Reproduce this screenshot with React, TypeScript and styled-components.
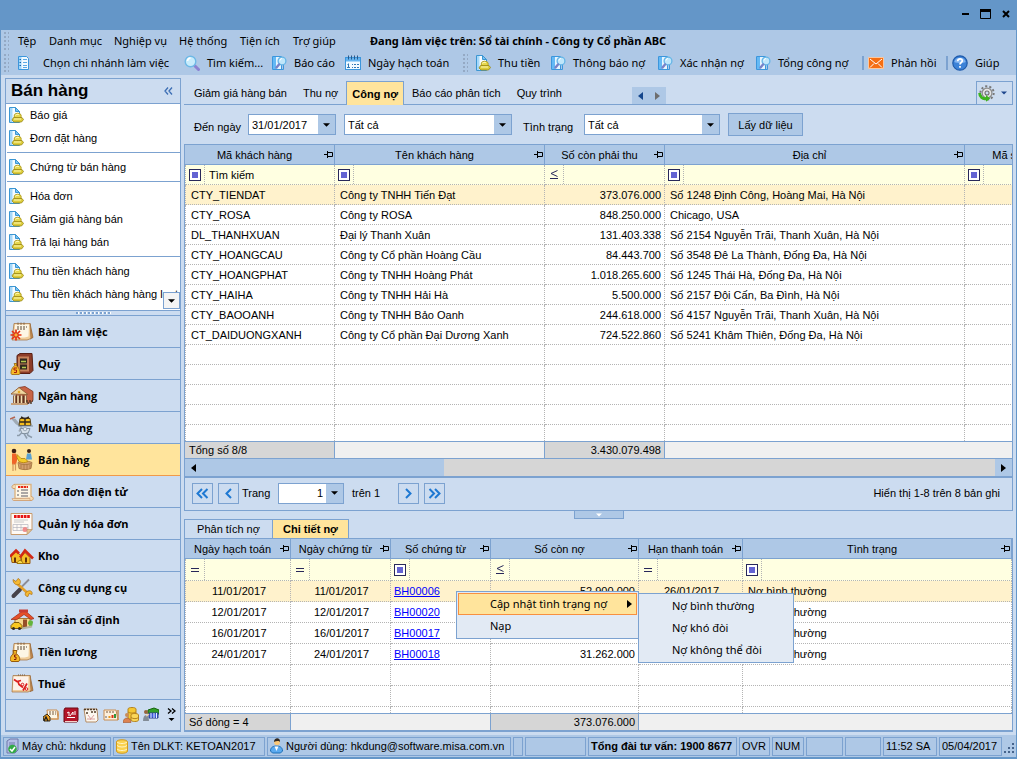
import React from 'react';
import styled, { createGlobalStyle, css } from 'styled-components';

const c = {
  frame: '#6496c8',
  bar: '#aec8e6',
  panel: '#ccdcf0',
  line: '#7ca2d0',
  active: '#ffe49c',
  rowActive: '#fff2cc',
  filter: '#ffffe1',
  dots: '#b4b4b4',
};

const sans = '"Liberation Sans", Arial, sans-serif';
const ui = '"Noto Sans", "Open Sans", sans-serif';
const uiBold = '"Open Sans", "Noto Sans", sans-serif';

const GlobalStyle = createGlobalStyle`
  *, *::before, *::after { box-sizing: border-box; }
  body { margin: 0; font: 11px/16px ${sans}; color: #000; background: ${c.panel}; }
  button, input, select { font: inherit; color: inherit; margin: 0; padding: 0; border: 0; background: none; border-radius: 0; outline: 0; }
  ul { list-style: none; margin: 0; padding: 0; }
  svg { display: block; flex: none; }
`;

/* ---------- page frame ---------- */
const Page = styled.div`
  min-height: 100vh;
  display: flex;
  flex-direction: column;
  background: ${c.panel};
  border: solid ${c.frame};
  border-width: 0 1px 2px;
  overflow: hidden;
`;
const TitleBar = styled.header`
  height: 30px;
  flex: none;
  margin: 0 -1px;
  padding: 0 5px 3px 0;
  display: flex;
  align-items: center;
  justify-content: flex-end;
  gap: 7px;
  background: ${c.frame};
`;
const WindowButton = styled.button`
  width: 13px;
  height: 13px;
  display: grid;
  place-items: center;
`;
const Bars = styled.div`
  height: 45px;
  flex: none;
  background: ${c.bar};
  font: 11px/18px ${ui};
  white-space: nowrap;
`;
const BarRow = styled.nav`
  height: 22px;
  padding-left: 2px;
  display: flex;
  align-items: center;
`;
const Grip = styled.span`
  width: 6px;
  height: 20px;
  flex: none;
  background-image: radial-gradient(circle, #94a9c4 1px, transparent 1px);
  background-size: 4px 4px;
`;
const MenuItem = styled.button<{ $w: number }>`
  width: ${(p) => p.$w}px;
  text-align: left;
  white-space: nowrap;
`;
const MenuList = styled.div`
  display: flex;
  padding-left: 9px;
`;
const WorkingOn = styled.strong``;
const ToolButton = styled.button<{ $w: number; $gap?: number }>`
  width: ${(p) => p.$w}px;
  flex: none;
  display: flex;
  align-items: center;
  gap: ${(p) => p.$gap ?? 7}px;
  white-space: nowrap;
`;
const ToolRow = styled(BarRow)`
  & > span + button { margin-left: 7px; }
`;
const ToolSeparator = styled.i`
  width: 2px;
  height: 14px;
  flex: none;
  margin-right: 4px;
  background: ${c.line};
`;
const Body = styled.div`
  flex: 1;
  display: flex;
  gap: 3px;
  padding: 3px 3px 3px 4px;
`;

/* ---------- sidebar ---------- */
const Sidebar = styled.aside`
  width: 176px;
  flex: none;
  display: flex;
  flex-direction: column;
  border: 1px solid ${c.line};
  border-bottom-width: 2px;
`;
const SideHeader = styled.div`
  height: 25px;
  padding: 0 5px;
  display: flex;
  align-items: center;
  justify-content: space-between;
  border-bottom: 1px solid ${c.line};
`;
const SideTitle = styled.h1`
  margin: 0;
  font: bold 17px/24px ${sans};
`;
const TaskArea = styled.div`
  height: 207px;
  display: grid;
  background: #fff;
  border-bottom: 1px solid ${c.line};
  overflow: hidden;
`;
const TaskList = styled.ul`
  grid-area: 1 / 1;
  min-width: 0;
`;
const TaskItem = styled.li<{ $last?: boolean }>`
  ${(p) =>
    p.$last &&
    css`
      &::after {
        content: '';
        display: block;
        height: 1px;
        margin: 2px 0 3px 1px;
        background: ${c.line};
      }
    `}
`;
const TaskButton = styled.button`
  height: 23px;
  width: 100%;
  padding: 0 0 1px 2px;
  display: flex;
  align-items: center;
  gap: 6px;
  white-space: nowrap;
  overflow: hidden;
`;
const ScrollDown = styled.button`
  grid-area: 1 / 1;
  place-self: end;
  z-index: 1;
  width: 17px;
  height: 17px;
  margin-bottom: 1px;
  display: grid;
  place-items: center;
  background: #f4f4f4;
  border: 1px solid ${c.line};
`;
const SideSplitter = styled.div`
  height: 4px;
  display: grid;
  place-items: center;
  &::after {
    content: '';
    width: 35px;
    height: 2px;
    background: repeating-linear-gradient(90deg, ${c.line} 0 2px, #fff 2px 3px, transparent 3px 4px);
  }
`;
const ModuleList = styled.ul`
  border-top: 1px solid ${c.line};
`;
const ModuleButton = styled.button<{ $on?: boolean }>`
  width: 100%;
  height: 32px;
  padding-left: 4px;
  display: flex;
  align-items: center;
  gap: 4px;
  font: bold 11px/16px ${uiBold};
  border-bottom: 1px solid ${(p) => (p.$on ? '#f09a4a' : c.line)};
  background: ${(p) => (p.$on ? c.active : 'none')};
`;
const MiniRow = styled.div`
  flex: 1;
  min-height: 30px;
  padding-right: 4px;
  display: flex;
  align-items: center;
  justify-content: flex-end;
  gap: 4px;
`;
const MiniButton = styled.button`
  display: block;
  &:last-child { margin-left: 4px; }
`;

/* ---------- main ---------- */
const Main = styled.main`
  flex: 1;
  min-width: 0;
  display: flex;
  flex-direction: column;
`;
const TabStrip = styled.div`
  height: 27px;
  padding: 3px 0 0 2px;
  display: flex;
  align-items: stretch;
  border-bottom: 1px solid ${c.line};
`;
const Tab = styled.button<{ $on?: boolean }>`
  height: 23px;
  padding: 0 8px;
  white-space: nowrap;
  ${(p) =>
    p.$on &&
    css`
      height: 24px;
      padding: 0 5px;
      font-weight: bold;
      background: ${c.active};
      border: 1px solid ${c.line};
      border-bottom: 0;
    `}
`;
const TabScroll = styled.div`
  margin: 6px auto 0 62px;
  display: flex;
  background: ${c.bar};
`;
const TabScrollButton = styled.button`
  width: 17px;
  display: grid;
  place-items: center;
`;
const GearButton = styled.button`
  width: 37px;
  height: 24px;
  display: flex;
  align-items: center;
  gap: 6px;
  padding-left: 1px;
  border: 1px solid ${c.line};
`;
const FilterBar = styled.form`
  height: 39px;
  padding-left: 10px;
  display: flex;
  align-items: center;
  gap: 8px;
`;
const FieldLabel = styled.label<{ $w: number }>`
  width: ${(p) => p.$w}px;
  flex: none;
  padding-top: 4px;
  white-space: nowrap;
`;
const Field = styled.div<{ $w: number }>`
  width: ${(p) => p.$w}px;
  height: 21px;
  display: grid;
  grid-template-columns: 1fr 17px;
  background: #fff;
  border: 1px solid ${c.line};
  & > input, & > select { grid-area: 1 / 1 / 2 / 2; width: 100%; min-width: 0; padding-left: 3px; }
  & > select { grid-column-end: 3; appearance: none; }
`;
const FieldArrow = styled.span`
  grid-area: 1 / 2;
  z-index: 1;
  display: grid;
  place-items: center;
  background: ${c.bar};
  pointer-events: none;
`;
const PageField = styled(Field)`
  & > select { text-align: right; text-align-last: right; padding-right: 20px; }
`;
const LoadButton = styled.button`
  width: 75px;
  height: 23px;
  background: ${c.bar};
  border: 1px solid ${c.line};
`;

/* ---------- data grids ---------- */
const GridPanel = styled.section`
  border: 1px solid ${c.line};
  overflow: hidden;
`;
const GridTable = styled.table<{ $extra?: number }>`
  width: calc(100% + ${(p) => p.$extra ?? 0}px);
  table-layout: fixed;
  border-collapse: separate;
  border-spacing: 0;
  background: #fff;
`;
const HeadCell = styled.th`
  height: 20px;
  padding: 0;
  font-weight: normal;
  background: ${c.bar};
  border: solid ${c.line};
  border-width: 0 1px 1px 0;
`;
const HeadInner = styled.div`
  display: flex;
  align-items: center;
  padding-right: 1px;
  white-space: nowrap;
  & > span { flex: 1; text-align: center; }
`;
const Cell = styled.td<{ $h: number; $align?: string; $on?: boolean; $open?: boolean }>`
  height: ${(p) => p.$h}px;
  padding: 0 3px 0 5px;
  line-height: 14px;
  text-align: ${(p) => p.$align ?? 'left'};
  white-space: nowrap;
  overflow: hidden;
  background: ${(p) => (p.$on ? c.rowActive : 'none')};
  border: dotted ${c.dots};
  border-width: 0 1px ${(p) => (p.$open ? 0 : 1)}px 0;
  &:first-child { border-left-width: 1px; }
`;
const FilterCell = styled(Cell)`
  padding: 0;
  background: ${c.filter};
`;
const FilterInner = styled.div<{ $h: number }>`
  height: ${(p) => p.$h}px;
  display: flex;
  & > input { flex: 1; width: 0; padding-left: 4px; }
`;
const OpButton = styled.button`
  width: 19px;
  display: grid;
  place-items: center;
  border-right: 1px dotted ${c.dots};
`;
const FootCell = styled.td<{ $fill?: boolean; $align?: string; $h: number }>`
  height: ${(p) => p.$h}px;
  padding: 0 3px 0 4px;
  line-height: 14px;
  text-align: ${(p) => p.$align ?? 'left'};
  background: ${(p) => (p.$fill ? '#d6d6d6' : '#f0f0f0')};
  border-top: 1px solid ${c.line};
  border-right: ${(p) => (p.$fill ? `1px solid ${c.line}` : 0)};
  &:has(+ [data-fill]) { border-right: 1px solid ${c.line}; }
`;
const DocLink = styled.a`
  color: #00f;
  margin-left: -2px;
`;
const HScroll = styled.div`
  height: 20px;
  display: grid;
  grid-template-columns: 17px minmax(0, 242fr) minmax(0, 551fr) 17px;
  background: ${c.bar};
  border: solid ${c.line};
  border-width: 1px 0 2px;
`;
const ScrollTrack = styled.span`
  grid-column: 3;
  background: #d6d6d6;
`;
const ScrollButton = styled.button`
  display: grid;
  place-items: center;
`;
const Pager = styled.div`
  height: 32px;
  padding: 0 12px 2px 7px;
  display: flex;
  align-items: center;
  gap: 5px;
  background: ${c.panel};
`;
const PageButton = styled.button`
  width: 21px;
  height: 21px;
  flex: none;
  display: grid;
  place-items: center;
  border: 1px solid ${c.line};
`;
const PagerBack = styled.div`
  display: flex;
  gap: 5px;
  margin-right: -5px;
`;
const PagerText = styled.label<{ $w: number }>`
  width: ${(p) => p.$w}px;
  padding-left: 3px;
`;
const PagerInfo = styled.span`
  margin-left: auto;
`;
const Splitter = styled.div`
  height: 8px;
  display: flex;
  justify-content: center;
`;
const SplitterButton = styled.button`
  width: 50px;
  display: grid;
  place-items: center;
  background: ${c.bar};
  border: 1px solid ${c.line};
  border-top: 0;
`;
const Detail = styled.section`
  position: relative;
  flex: 1;
`;
const DetailTabs = styled.div`
  display: flex;
`;
const DetailTab = styled.button<{ $w: number; $on?: boolean }>`
  width: ${(p) => p.$w}px;
  height: 19px;
  border: solid ${c.line};
  border-width: 1px 0 0 1px;
  font-weight: ${(p) => (p.$on ? 'bold' : 'normal')};
  background: ${(p) => (p.$on ? c.active : 'none')};
  &:last-child { border-right-width: 1px; }
`;
const DetailGrid = styled(GridPanel)`
  border-bottom-width: 2px;
`;

/* ---------- context menu ---------- */
const menuBox = css`
  position: absolute;
  padding: 1px;
  background: #e2eaf4;
  border: 1px solid ${c.line};
`;
const ContextMenu = styled.div`
  ${menuBox}
  left: 272px;
  top: 72px;
  width: 183px;
  z-index: 2;
`;
const SubMenu = styled.div`
  ${menuBox}
  left: 100%;
  top: 1px;
  width: 156px;
`;
const MenuRow = styled.button<{ $on?: boolean }>`
  width: 100%;
  height: 22px;
  padding: 0 5px 0 32px;
  display: flex;
  align-items: center;
  justify-content: space-between;
  font: 11px/16px ${ui};
  white-space: nowrap;
  ${(p) =>
    p.$on &&
    css`
      padding: 0 4px 0 31px;
      background: ${c.active};
      border: 1px solid #f89040;
    `}
`;

/* ---------- status bar ---------- */
const StatusBar = styled.footer`
  height: 22px;
  padding: 0 0 0 2px;
  display: flex;
  align-items: center;
  gap: 2px;
  background: ${c.bar};
`;
const StatusCell = styled.span<{ $w: number; $bold?: boolean }>`
  width: ${(p) => p.$w}px;
  height: 19px;
  padding: 0 2px;
  display: flex;
  align-items: center;
  gap: 3px;
  white-space: nowrap;
  font-weight: ${(p) => (p.$bold ? 'bold' : 'normal')};
  border: 1px solid ${c.line};
`;
const Resize = styled.span`
  margin: 6px 0 0 auto;
`;

/* ---------- small glyphs ---------- */
const Down = ({ w = 7, fill = '#000' }: { w?: number; fill?: string }) => (
  <svg width={w} height="4" viewBox="0 0 8 4"><path d="M0 0h8L4 4z" fill={fill} /></svg>
);
const Side = ({ right, fill = '#000' }: { right?: boolean; fill?: string }) => (
  <svg width="5" height="8" viewBox="0 0 5 8"><path d={right ? 'M0 0v8l5-4z' : 'M5 0v8L0 4z'} fill={fill} /></svg>
);
const Pin = () => (
  <svg width="9" height="7" viewBox="0 0 9 7" fill="none" stroke="#000">
    <path d="M0 3.5h3M3.5 0v7M4 1.5h4.5v4H4" />
  </svg>
);
const SquareOp = () => (
  <svg width="12" height="12" viewBox="0 0 12 12">
    <rect x=".5" y=".5" width="11" height="11" fill="#fff" stroke="#28285a" />
    <rect x="3" y="3" width="6" height="6" fill="#6464d2" />
  </svg>
);
const EqualOp = () => (
  <svg width="8" height="4" viewBox="0 0 8 4"><path d="M0 .5h8M0 3.5h8" stroke="#28285a" /></svg>
);
const LessOp = () => (
  <svg width="8" height="9" viewBox="0 0 8 9" fill="none" stroke="#28285a">
    <path d="M7.500 .5L1 3.500l6.500 3M0 8.500h8" />
  </svg>
);
const Chevrons = ({ right, two }: { right?: boolean; two?: boolean }) => (
  <svg width="13" height="11" viewBox="0 0 13 11" fill="none" stroke="#1e78d2" strokeWidth="2">
    <g transform={right ? 'matrix(-1 0 0 1 13 0)' : undefined}>
      <path d={two ? 'M6 1L1.500 5.500 6 10M11.500 1L7 5.500l4.500 4.500' : 'M9 1L4.500 5.500 9 10'} />
    </g>
  </svg>
);

/* ---------- toolbar icons ---------- */
const Icon = ({ children, s = 16 }: { children: React.ReactNode; s?: number }) => (
  <svg width={s} height={s} viewBox="0 0 16 16" fill="none">{children}</svg>
);
const DocListIcon = () => (
  <Icon>
    <path d="M2.500 1.500h8l2 2v11h-10z" fill="#f2faff" stroke="#3c96dc" />
    <path d="M3 2h2.500v12H3z" fill="#a0d7fa" />
    <path d="M7 4.500h4M7 7.500h4M7 10.500h4M7 12.500h4" stroke="#5aaae6" />
    <path d="M3.500 4.500h1.500M3.500 7.500h1.500M3.500 10.500h1.500" stroke="#1e64aa" />
  </Icon>
);
const LensIcon = () => (
  <Icon>
    <path d="M11 11l3.500 3.500" stroke="#8c82d2" strokeWidth="3" strokeLinecap="round" />
    <circle cx="6.500" cy="6.500" r="5.300" fill="#c8ecfc" stroke="#6eb9e6" strokeWidth="1.400" />
    <path d="M3.500 6a3.300 3.300 0 013-3" stroke="#fff" strokeWidth="1.600" />
  </Icon>
);
const ReportIcon = () => (
  <Icon>
    <path d="M1.500 1.500h9v13h-9z" fill="#e6f5ff" stroke="#3c96dc" />
    <path d="M2 2h3v12H2z" fill="#64b9f5" />
    <path d="M12.500 9v5.500h-3" stroke="#3c96dc" />
    <circle cx="11" cy="6" r="3.900" fill="#bfe6fa" stroke="#64b4e6" strokeWidth="1.300" />
    <path d="M8 9.500L5.500 12.500" stroke="#7882c8" strokeWidth="2.400" strokeLinecap="round" />
    <path d="M9 5.500a2 2 0 012-2" stroke="#fff" />
  </Icon>
);
const CalendarIcon = () => (
  <Icon>
    <rect x=".5" y="2.500" width="15" height="12" fill="#f2faff" stroke="#3c96dc" />
    <path d="M1 3h14v3.500H1z" fill="#64b4f0" />
    <path d="M3.500 .5v4M6.500 .5v4M9.500 .5v4M12.500 .5v4" stroke="#285a8c" />
    <path d="M3.500 8.500v4.500M2.500 9.500h1M2 12.500h3M7 9.500h7M7 12.500h7" stroke="#3278b4" />
    <path d="M8.500 8v6M11.500 8v6" stroke="#f2faff" />
  </Icon>
);
const DocCoinIcon = () => (
  <Icon>
    <path d="M1.500 .5h6l4 4v11h-10z" fill="#f5fbff" stroke="#3c96d2" />
    <path d="M2 1h2.500v14H2z" fill="#a5d8fa" />
    <path d="M7.500 .5v4h4z" fill="#78c3f5" stroke="#3c96d2" />
    <ellipse cx="9.700" cy="9" rx="3.600" ry="2.800" fill="#e6d74b" stroke="#aa9619" strokeWidth=".8" />
    <path d="M5.500 10.500h8.500l1.500 2-2 2.500H6l-2-2z" fill="#dccd3c" stroke="#9b8714" strokeWidth=".8" />
    <path d="M7 8.500c1-1.200 3-1.400 4-.8M6 12h7" stroke="#fff8b4" />
  </Icon>
);
const MailIcon = () => (
  <Icon>
    <path d="M.5 2.500h15v11H.5z" fill="#f56e14" stroke="#fac8a0" />
    <path d="M2 4l6 5 6-5M2 12.500l4-4M14 12.500l-4-4" stroke="#fff" />
  </Icon>
);
const HelpIcon = () => (
  <Icon>
    <circle cx="8" cy="8" r="7.200" fill="#3c82d7" stroke="#1e5aaa" strokeWidth="1.200" />
    <path d="M2.300 7a5.800 5.300 0 0111.400 0c-3 1.500-8.400 1.500-11.400 0z" fill="#82b4f0" />
    <path d="M5.700 6.200C5.700 3 10.500 3.200 10.300 6 10.200 7.500 8 7.500 8 9.500M8 11v1.800" stroke="#fff" strokeWidth="1.700" />
  </Icon>
);
const GearIcon = () => (
  <Icon s={17}>
    <circle cx="8.500" cy="7.500" r="6.300" stroke="#787878" strokeWidth="1.800" strokeDasharray="2 1.960" />
    <circle cx="8.500" cy="7.500" r="4.600" fill="#e6e6e6" stroke="#8c8c8c" strokeWidth="1.200" />
    <circle cx="8.500" cy="7.500" r="1.900" fill="#ccdcf0" stroke="#6e6e6e" />
    <path d="M1.500 7.500c0 4 3 6 6.500 5.300" stroke="#3cb41e" strokeWidth="2.600" />
    <path d="M7.500 9.500l4 3.300-4 3z" fill="#3cb41e" />
  </Icon>
);

/* ---------- module icons ---------- */
const cal = (
  <>
    <path d="M20 3l3 14-3 1.500z" fill="#c88c50" stroke="#8c5a28" strokeWidth=".7" />
    <path d="M4 3h16l1 15-4 1.500H2z" fill="#f0cd9b" stroke="#a06e3c" strokeWidth=".7" />
    <path d="M5 4h14l-.5 12c-4 1.500-9 1-14 1z" fill="#fdf6e6" />
    <path d="M7 6.500h10M7 8.500h9" stroke="#5a4632" strokeDasharray="2 1" />
    <path d="M8 2v2.500M11 2v2.500M14 2v2.500" stroke="#785a3c" strokeWidth=".8" />
  </>
);
const moduleArt: Record<string, React.ReactNode> = {
  desk: (
    <>{cal}<path d="M6 9v11M.5 14.500h11M2 10.500l8 8M10 10.500l-8 8" stroke="#e63214" strokeWidth="1.700" /><circle cx="6" cy="14.500" r="2.200" fill="#ffb43c" stroke="#d22814" /></>
  ),
  safe: (
    <>
      <path d="M7 3l3-2h12l1 17-3 3H7z" fill="#8c3c28" stroke="#5a2014" />
      <path d="M8 4h11v15H8z" fill="#c8825a" />
      <path d="M10 6h7v5h-7zM10 12h7v5h-7z" fill="#32281e" />
      <path d="M11 9h5M12 15h4" stroke="#b4c850" strokeWidth="1.600" />
      <path d="M4 11h3l-1 2c4 2 5 9 3 9H2c-2 0-1-7 3-9z" fill="#f5b928" stroke="#96640a" strokeWidth=".8" />
      <path d="M7 15.500H4v2h2.500v2.500H4" stroke="#aa1e0a" />
    </>
  ),
  bank: (
    <>
      <path d="M9 3l6-1 8 5v9l-6 4H3z" fill="#c86446" stroke="#82321e" strokeWidth=".8" />
      <path d="M1 9.500L9 3l9 7z" fill="#f0d7a0" stroke="#96643c" />
      <path d="M3 11h14v8H3z" fill="#64321e" />
      <path d="M4.500 11v8M8 11v8M11.500 11v8M15.500 11v8" stroke="#f5e1b4" strokeWidth="1.600" />
      <path d="M1 19.500h17" stroke="#c8a078" strokeWidth="2" />
      <path d="M16 16.500h7M17 18.500h6" stroke="#503c28" strokeWidth="1.500" strokeDasharray="2 1" />
      <circle cx="9" cy="7.500" r="1.300" fill="#e6aa28" />
    </>
  ),
  buy: (
    <>
      <path d="M2 3h3l5 6M3 3c3 5 6 6 8 7M12 10l-3 5" stroke="#a0aab4" strokeWidth="1.600" />
      <path d="M0 2.500l5-2" stroke="#b46450" strokeWidth="1.600" />
      <path d="M10 2h10l1 7H9z" fill="#f5be1e" stroke="#503c14" />
      <path d="M15 1v8M10 5.500h10M11 .5l4 2 4-2" stroke="#32281e" strokeWidth="1.400" />
      <path d="M8 9.500h15M10 12h10l-2 5h-6z" fill="#d7e1eb" stroke="#8291a0" />
      <path d="M12 16l-3 3h-2M17 16l1 3 4 2M14 17l3 5" stroke="#8c9baa" strokeWidth="1.500" />
      <circle cx="15" cy="12.500" r="1.800" fill="#e6ebf0" stroke="#8291a0" strokeWidth=".7" />
    </>
  ),
  sell: (
    <>
      <circle cx="4" cy="2.500" r="2.300" fill="#3c2014" />
      <path d="M2 5h4l1.500 5-1.500 6H2z" fill="#f06428" />
      <path d="M3 15v7.500M5.500 15v7" stroke="#d2965a" strokeWidth="1.200" />
      <circle cx="19" cy="2.500" r="2" fill="#3c2014" />
      <path d="M17 5h4l1 6h-6z" fill="#5aa0d2" />
      <path d="M8 14c3-2 10-2 14 0l-1 6c-3 1.500-9 1.500-12 0z" fill="#d2a06e" stroke="#966432" strokeWidth=".7" />
      <path d="M9 15c4 1.500 8 1.500 12 0M11 16v4M14 16v5M17 16v5M20 16v4" stroke="#a06e3c" strokeWidth=".7" />
      <path d="M7 6l4 4h4l3 3c-3 1.500-6 1.500-9 0L7 9z" fill="#f5cd28" stroke="#b4820a" strokeWidth=".8" />
    </>
  ),
  einvoice: (
    <>
      <path d="M5 4h16v14H5z" fill="#fdf6e6" stroke="#dcb482" strokeWidth="1.400" />
      <path d="M5 4c-3 0-4 3-2 4h2M21 16c3 0 3 4 0 4H4" fill="#f5dcb4" stroke="#d2a06e" />
      <path d="M2 18h18v2H3z" fill="#f5dcb4" stroke="#c8966e" strokeWidth=".6" />
      <path d="M8 6.500h10" stroke="#e62814" strokeWidth="1.800" strokeDasharray="2.300 .6" />
      <path d="M7 10.500h2M7 14.500h2M11 9.500h7M11 12.500h7M11 15.500h7" stroke="#5a5a64" />
    </>
  ),
  invoice: (
    <>
      <path d="M1 1h21v16l-5 5H1z" fill="#fffaf5" stroke="#c89b6e" />
      <path d="M4 4h16" stroke="#e61414" strokeWidth="3" strokeDasharray="2.600 .7" />
      <path d="M4 7.500h14M4 9.500h10" stroke="#c8c8c8" />
      <path d="M3 12h15v6H3zM7 12v6M11 12v6M3 15h15" stroke="#b4b4be" strokeWidth=".7" />
      <circle cx="15" cy="17" r="2.500" fill="#f08c8c" />
      <path d="M17 22v-5h5z" fill="#e6c396" stroke="#b48c5a" strokeWidth=".6" />
    </>
  ),
  stock: (
    <>
      <path d="M1 11l5-4 5 4v7H2z" fill="#f5be28" stroke="#965a14" />
      <path d="M11 12l4-4 5 5v6h-8z" fill="#f5be28" stroke="#965a14" />
      <path d="M0 12l6-6 3 3M10 13l5-7 8 8" stroke="#d22814" strokeWidth="2.600" />
      <path d="M4 13h2v5H4zM15 13h2v5h-2z" fill="#64320a" />
      <path d="M7 19c1-4 5-4 6 0z" fill="#fadc50" stroke="#a0780a" />
    </>
  ),
  tools: (
    <>
      <path d="M10 12l9-9" stroke="#8c8c96" strokeWidth="1.800" />
      <path d="M3.500 19.500L10 13" stroke="#46424a" strokeWidth="4" strokeLinecap="round" />
      <path d="M7 7l11 10" stroke="#e6a028" strokeWidth="2.600" />
      <path d="M3 3l3 2 2-3c3 1 3 5 1 6-3 1-6-1-6-5zM17 15c3-2 6 0 5 3l-3-1-1 3c-3 0-4-3-1-5z" fill="#f5b932" stroke="#aa6e14" strokeWidth=".7" />
    </>
  ),
  asset: (
    <>
      <path d="M5 10h15v9H5z" fill="#f5d78c" stroke="#aa7832" />
      <path d="M1 11L12 3h4l8 7-3 1-7-5-7 5z" fill="#e65028" stroke="#9b2814" strokeWidth=".7" />
      <path d="M9 1h9v3H9z" fill="#c83c32" />
      <path d="M13 11h4v8h-4z" fill="#965028" />
      <path d="M1 17l3-3h5l3 3v3H1z" fill="#fac81e" stroke="#7d5a0a" />
      <circle cx="3.500" cy="20" r="1.500" fill="#32281e" /><circle cx="9.500" cy="20" r="1.500" fill="#32281e" />
      <path d="M18 15c0-4 5-4 5-1l-1 4-3-1z" fill="#64b43c" />
      <path d="M12 20l10-2" stroke="#b4b4a0" strokeWidth="2" />
    </>
  ),
  salary: (
    <>{cal}<path d="M3 10h4l-1 3c4 2 5 8 2 8H2c-3 0-2-6 2-8z" fill="#f5b928" stroke="#965a0a" /><path d="M6.500 14.500H4.500v2H6v2.500H4" stroke="#8c1e0a" /></>
  ),
  tax: (
    <>
      <path d="M20 3l3 15-3 1z" fill="#c88c50" stroke="#8c5a28" strokeWidth=".7" />
      <path d="M3 3h17l1 15-3 1.500H2z" fill="#f0cd9b" stroke="#a06e3c" strokeWidth=".7" />
      <path d="M3.500 4h15l-.5 13.500H3z" fill="#fdf2ea" />
      <path d="M4 7l3 2 4-1M8 9l1 3 4 3M17 11l-4 7" stroke="#dc1e1e" strokeWidth="1.700" />
      <circle cx="12.500" cy="12" r="1.300" stroke="#dc1e1e" /><circle cx="16.500" cy="16.500" r="1.300" stroke="#dc1e1e" />
      <path d="M8 2.500h8" stroke="#785a3c" strokeDasharray="1 1" />
    </>
  ),
};
const ModuleIcon = ({ name, s = 24 }: { name: string; s?: number }) => (
  <svg width={s} height={s} viewBox="0 0 24 23" fill="none">{moduleArt[name]}</svg>
);
const miniArt: React.ReactNode[] = [
  <><path d="M4 3h10l1 9H5z" fill="#fdf6e6" stroke="#c88c50" /><path d="M6 5h7M6 7h7" stroke="#785a3c" strokeDasharray="2 1" /><path d="M0 10l4-3 3 3v4H1z" fill="#f0a01e" stroke="#322814" /><path d="M1 14l2-4 2 4" stroke="#1e1e1e" strokeWidth="1.400" /><path d="M15 4l1 8H8" stroke="#d79650" /></>,
  <><path d="M2 1h13v12l-1 2H1V3z" fill="#b41428" stroke="#6e0a14" /><path d="M4 6l2-1v4M7 9l3-4v3M12 4v4M4 10.500h8" stroke="#fff" /><path d="M2 14.500h12" stroke="#f5d2c8" /></>,
  <><path d="M1 2h13l1 11-2 2H3z" fill="#fdf8f0" stroke="#b48c64" /><path d="M1 2.500h13M3 6h2M8 5h5" stroke="#503c28" strokeWidth="1.500" strokeDasharray="2 1" /><path d="M5 8l3 4M11 8l-4 5M4 12h8" stroke="#dca0a0" /></>,
  <><path d="M1 3h12l2 10H1z" fill="#fdf0dc" stroke="#c88c50" /><path d="M15 3v10" stroke="#c88c50" strokeWidth="1.500" /><path d="M3 5h9" stroke="#785a3c" strokeDasharray="2 1" /><path d="M3 11V9" stroke="#aaa" strokeWidth="2" /><path d="M6.500 11V9" stroke="#e6961e" strokeWidth="2" /><path d="M9.500 11V8" stroke="#dc3214" strokeWidth="2" /><path d="M12 11V7" stroke="#32963c" strokeWidth="2" /></>,
  <><path d="M5 2c0-2 8-2 8 0v9c0 2-8 2-8 0z" fill="#f5c832" stroke="#b4821e" /><path d="M8 8c0-2 7.500-2 7.500 0v5c0 2-7.500 2-7.500 0z" fill="#fad75a" stroke="#b4821e" /><path d="M5 5c2 1.500 6 1.500 8 0M8 10.500c2 1.500 6 1.500 7.500 0" stroke="#b4821e" /><circle cx="4" cy="8" r="2" fill="#c88c5a" /><path d="M0 15.500c0-6 8-6 8 0z" fill="#dc8250" stroke="#a05028" strokeWidth=".6" /></>,
  <><path d="M5 3l6-2 5 2v4H5z" fill="#32a028" stroke="#14640a" /><path d="M6 6h9v5H6z" fill="#3c5adc" stroke="#283c8c" /><path d="M8 6v5M11 6v5M13.500 6v5" stroke="#e6f0ff" /><circle cx="3" cy="5" r="2" fill="#96643c" /><path d="M0 14c0-8 6-8 6 0z" fill="#828c96" /><path d="M3 9l3-2" stroke="#f0c8a0" strokeWidth="1.500" /></>,
];

/* ---------- data ---------- */
const menus: [string, number][] = [['Tệp', 31], ['Danh mục', 65], ['Nghiệp vụ', 65], ['Hệ thống', 61], ['Tiện ích', 53], ['Trợ giúp', 77]];
const tasks: [string, boolean][] = [
  ['Báo giá', false], ['Đơn đặt hàng', true], ['Chứng từ bán hàng', true], ['Hóa đơn', false],
  ['Giảm giá hàng bán', false], ['Trả lại hàng bán', true], ['Thu tiền khách hàng', false], ['Thu tiền khách hàng hàng loạt', false],
];
const modules: [string, string][] = [
  ['desk', 'Bàn làm việc'], ['safe', 'Quỹ'], ['bank', 'Ngân hàng'], ['buy', 'Mua hàng'], ['sell', 'Bán hàng'], ['einvoice', 'Hóa đơn điện tử'],
  ['invoice', 'Quản lý hóa đơn'], ['stock', 'Kho'], ['tools', 'Công cụ dụng cụ'], ['asset', 'Tài sản cố định'], ['salary', 'Tiền lương'], ['tax', 'Thuế'],
];
const customers = [
  ['CTY_TIENDAT', 'Công ty TNHH Tiến Đạt', '373.076.000', 'Số 1248 Định Công, Hoàng Mai, Hà Nội'],
  ['CTY_ROSA', 'Công ty ROSA', '848.250.000', 'Chicago, USA'],
  ['DL_THANHXUAN', 'Đại lý Thanh Xuân', '131.403.338', 'Số 2154 Nguyễn Trãi, Thanh Xuân, Hà Nội'],
  ['CTY_HOANGCAU', 'Công ty Cổ phần Hoàng Cầu', '84.443.700', 'Số 3548 Đê La Thành, Đống Đa, Hà Nội'],
  ['CTY_HOANGPHAT', 'Công ty TNHH Hoàng Phát', '1.018.265.600', 'Số 1245 Thái Hà, Đống Đa, Hà Nội'],
  ['CTY_HAIHA', 'Công ty TNHH Hải Hà', '5.500.000', 'Số 2157 Đội Cấn, Ba Đình, Hà Nội'],
  ['CTY_BAOOANH', 'Công ty TNHH Bảo Oanh', '244.618.000', 'Số 4157 Nguyễn Trãi, Thanh Xuân, Hà Nội'],
  ['CT_DAIDUONGXANH', 'Công ty Cổ phần Đại Dương Xanh', '724.522.860', 'Số 5241 Khâm Thiên, Đống Đa, Hà Nội'],
];
const debts = [
  ['11/01/2017', 'BH00006', '52.900.000', '26/01/2017'],
  ['12/01/2017', 'BH00020', '', ''],
  ['16/01/2017', 'BH00017', '', ''],
  ['24/01/2017', 'BH00018', '31.262.000', ''],
];

const Heads = ({ items }: { items: string[] }) => (
  <thead>
    <tr>
      {items.map((t) => (
        <HeadCell key={t} scope="col"><HeadInner><span>{t}</span><Pin /></HeadInner></HeadCell>
      ))}
    </tr>
  </thead>
);
const ops: Record<string, React.ReactNode> = { sq: <SquareOp />, eq: <EqualOp />, le: <LessOp /> };
const Filters = ({ kinds, h, first }: { kinds: string[]; h: number; first?: string }) => (
  <tr>
    {kinds.map((k, i) => (
      <FilterCell key={i} $h={h}>
        <FilterInner $h={h - 1}>
          <OpButton type="button" aria-label="Điều kiện lọc">{ops[k]}</OpButton>
          <input aria-label="Lọc" defaultValue={i === 0 ? first : undefined} />
        </FilterInner>
      </FilterCell>
    ))}
  </tr>
);
const Blank = ({ n, cols, h, rest }: { n: number; cols: number; h: number; rest: number }) => (
  <>
    {Array.from({ length: n + 1 }, (_, r) => (
      <tr key={r}>
        {Array.from({ length: cols }, (_, i) => <Cell key={i} $h={r < n ? h : rest} $open={r === n} />)}
      </tr>
    ))}
  </>
);
const Columns = ({ widths }: { widths: (number | undefined)[] }) => (
  <colgroup>{widths.map((w, i) => <col key={i} width={w} />)}</colgroup>
);

export default function App() {
  return (
    <Page>
      <GlobalStyle />
      <TitleBar>
        <WindowButton aria-label="Thu nhỏ"><svg width="7" height="2"><path d="M0 0h7v2H0z" /></svg></WindowButton>
        <WindowButton aria-label="Phóng to"><svg width="11" height="10"><path d="M.5 .5h10v9H.5z" fill="none" stroke="#000" /><path d="M0 0h11v3H0z" /></svg></WindowButton>
        <WindowButton aria-label="Đóng"><svg width="8" height="8"><path d="M1 1l6 6M7 1L1 7" stroke="#000" strokeWidth="2" /></svg></WindowButton>
      </TitleBar>
      <Bars>
        <BarRow>
          <Grip />
          <MenuList>{menus.map(([t, w]) => <MenuItem key={t} $w={w}>{t}</MenuItem>)}</MenuList>
          <WorkingOn>Đang làm việc trên: Sổ tài chính - Công ty Cổ phần ABC</WorkingOn>
        </BarRow>
        <ToolRow>
          <Grip />
          <ToolButton $w={168} $gap={11}><DocListIcon />Chọn chi nhánh làm việc</ToolButton>
          <ToolButton $w={87}><LensIcon />Tìm kiếm...</ToolButton>
          <ToolButton $w={74}><ReportIcon />Báo cáo</ToolButton>
          <ToolButton $w={117}><CalendarIcon />Ngày hạch toán</ToolButton>
          <Grip />
          <ToolButton $w={75}><DocCoinIcon />Thu tiền</ToolButton>
          <ToolButton $w={107}><ReportIcon />Thông báo nợ</ToolButton>
          <ToolButton $w={98}><ReportIcon />Xác nhận nợ</ToolButton>
          <ToolButton $w={107}><ReportIcon />Tổng công nợ</ToolButton>
          <ToolSeparator />
          <ToolButton $w={78}><MailIcon />Phản hồi</ToolButton>
          <ToolSeparator />
          <ToolButton $w={55}><HelpIcon />Giúp</ToolButton>
        </ToolRow>
      </Bars>

      <Body>
        <Sidebar>
          <SideHeader>
            <SideTitle>Bán hàng</SideTitle>
            <WindowButton aria-label="Thu gọn">
              <svg width="9" height="8" fill="none" stroke="#3c6eb4" strokeWidth="1.300"><path d="M4 .5L1 4l3 3.500M8 .5L5 4l3 3.500" /></svg>
            </WindowButton>
          </SideHeader>
          <TaskArea>
            <TaskList>
              {tasks.map(([t, last]) => (
                <TaskItem key={t} $last={last}><TaskButton><DocCoinIcon />{t}</TaskButton></TaskItem>
              ))}
            </TaskList>
            <ScrollDown aria-label="Cuộn xuống"><Down /></ScrollDown>
          </TaskArea>
          <SideSplitter />
          <ModuleList>
            {modules.map(([icon, t]) => (
              <li key={t}><ModuleButton $on={icon === 'sell'}><ModuleIcon name={icon} />{t}</ModuleButton></li>
            ))}
          </ModuleList>
          <MiniRow>
            {miniArt.map((art, i) => <MiniButton key={i} aria-label={`Phân hệ ${i + 13}`}><Icon>{art}</Icon></MiniButton>)}
            <MiniButton aria-label="Thêm">
              <svg width="9" height="14" fill="none" stroke="#000" strokeWidth="1.300"><path d="M1 .5L4 3 1 5.500M5 .5L8 3 5 5.500" /><path d="M1.500 10h6L4.500 13z" fill="#000" stroke="none" /></svg>
            </MiniButton>
          </MiniRow>
        </Sidebar>

        <Main>
          <TabStrip>
            <Tab>Giảm giá hàng bán</Tab>
            <Tab>Thu nợ</Tab>
            <Tab $on>Công nợ</Tab>
            <Tab>Báo cáo phân tích</Tab>
            <Tab>Quy trình</Tab>
            <TabScroll>
              <TabScrollButton aria-label="Trước"><Side fill="#14468c" /></TabScrollButton>
              <TabScrollButton aria-label="Sau"><Side right fill="#6e6e6e" /></TabScrollButton>
            </TabScroll>
            <GearButton aria-label="Tùy chọn"><GearIcon /><Down w={6} fill="#1e468c" /></GearButton>
          </TabStrip>
          <FilterBar>
            <FieldLabel $w={46} htmlFor="date">Đến ngày</FieldLabel>
            <Field $w={88}><input id="date" defaultValue="31/01/2017" /><FieldArrow><Down /></FieldArrow></Field>
            <Field $w={168}><select aria-label="Khách hàng"><option>Tất cả</option></select><FieldArrow><Down /></FieldArrow></Field>
            <FieldLabel $w={56} htmlFor="state">&nbsp;Tình trạng</FieldLabel>
            <Field $w={136}><select id="state"><option>Tất cả</option></select><FieldArrow><Down /></FieldArrow></Field>
            <LoadButton type="button">Lấy dữ liệu</LoadButton>
          </FilterBar>

          <GridPanel>
            <GridTable $extra={73}>
              <Columns widths={[150, 210, 120, undefined, 120]} />
              <Heads items={['Mã khách hàng', 'Tên khách hàng', 'Số còn phải thu', 'Địa chỉ', 'Mã số thuế']} />
              <tbody>
                <Filters kinds={['sq', 'sq', 'le', 'sq', 'sq']} h={20} first="Tìm kiếm" />
                {customers.map(([id, name, sum, addr], i) => (
                  <tr key={id}>
                    <Cell $h={20} $on={i === 0}>{id}</Cell>
                    <Cell $h={20} $on={i === 0}>{name}</Cell>
                    <Cell $h={20} $on={i === 0} $align="right">{sum}</Cell>
                    <Cell $h={20} $on={i === 0}>{addr}</Cell>
                    <Cell $h={20} $on={i === 0} />
                  </tr>
                ))}
                <Blank n={4} cols={5} h={20} rest={16} />
              </tbody>
              <tfoot>
                <tr>
                  <FootCell $h={17} $fill data-fill="">Tổng số 8/8</FootCell>
                  <FootCell $h={17} />
                  <FootCell $h={17} $fill data-fill="" $align="right">3.430.079.498</FootCell>
                  <FootCell $h={17} />
                  <FootCell $h={17} />
                </tr>
              </tfoot>
            </GridTable>
            <HScroll>
              <ScrollButton aria-label="Cuộn trái"><Side /></ScrollButton>
              <ScrollTrack />
              <ScrollButton aria-label="Cuộn phải"><Side right /></ScrollButton>
            </HScroll>
            <Pager>
              <PagerBack>
                <PageButton aria-label="Trang đầu"><Chevrons two /></PageButton>
                <PageButton aria-label="Trang trước"><Chevrons /></PageButton>
              </PagerBack>
              <PagerText $w={34} htmlFor="page">Trang</PagerText>
              <PageField $w={66}><select id="page"><option>1</option></select><FieldArrow><Down /></FieldArrow></PageField>
              <PagerText $w={44} as="span">trên 1</PagerText>
              <PageButton aria-label="Trang sau"><Chevrons right /></PageButton>
              <PageButton aria-label="Trang cuối"><Chevrons right two /></PageButton>
              <PagerInfo>Hiển thị 1-8 trên 8 bản ghi</PagerInfo>
            </Pager>
          </GridPanel>
          <Splitter><SplitterButton aria-label="Thu gọn chi tiết"><Down w={6} fill="#fff" /></SplitterButton></Splitter>

          <Detail>
            <DetailTabs>
              <DetailTab $w={88}>Phân tích nợ</DetailTab>
              <DetailTab $w={77} $on>Chi tiết nợ</DetailTab>
            </DetailTabs>
            <DetailGrid>
              <GridTable>
                <Columns widths={[106, 100, 100, 148, 104, undefined]} />
                <Heads items={['Ngày hạch toán', 'Ngày chứng từ', 'Số chứng từ', 'Số còn nợ', 'Hạn thanh toán', 'Tình trạng']} />
                <tbody>
                  <Filters kinds={['eq', 'eq', 'sq', 'le', 'eq', 'sq']} h={22} />
                  {debts.map(([day, doc, sum, due], i) => (
                    <tr key={doc}>
                      <Cell $h={21} $on={i === 0} $align="center">{day}</Cell>
                      <Cell $h={21} $on={i === 0} $align="center">{day}</Cell>
                      <Cell $h={21} $on={i === 0}><DocLink href="#">{doc}</DocLink></Cell>
                      <Cell $h={21} $on={i === 0} $align="right">{sum}</Cell>
                      <Cell $h={21} $on={i === 0} $align="center">{due}</Cell>
                      <Cell $h={21} $on={i === 0}>Nợ bình thường</Cell>
                    </tr>
                  ))}
                  <Blank n={2} cols={6} h={21} rest={6} />
                </tbody>
                <tfoot>
                  <tr>
                    <FootCell $h={17} $fill data-fill="">Số dòng = 4</FootCell>
                    <FootCell $h={17} />
                    <FootCell $h={17} />
                    <FootCell $h={17} $fill data-fill="" $align="right">373.076.000</FootCell>
                    <FootCell $h={17} />
                    <FootCell $h={17} />
                  </tr>
                </tfoot>
              </GridTable>
            </DetailGrid>
            <ContextMenu role="menu">
              <MenuRow role="menuitem" $on>Cập nhật tình trạng nợ<Side right /></MenuRow>
              <MenuRow role="menuitem">Nạp</MenuRow>
              <SubMenu role="menu">
                <MenuRow role="menuitem">Nợ bình thường</MenuRow>
                <MenuRow role="menuitem">Nợ khó đòi</MenuRow>
                <MenuRow role="menuitem">Nợ không thể đòi</MenuRow>
              </SubMenu>
            </ContextMenu>
          </Detail>
        </Main>
      </Body>

      <StatusBar>
        <StatusCell $w={108}>
          <svg width="13" height="16" fill="none"><path d="M1 3l3-2h8v11l-3 3H1z" fill="#b4bee6" stroke="#6e78aa" /><path d="M3 5h6M3 7h6" stroke="#6e78aa" /><circle cx="6.500" cy="11" r="4.300" fill="#32aa46" /><path d="M4 11l2 2 3-4" stroke="#fff" strokeWidth="1.500" /></svg>
          Máy chủ: hkdung
        </StatusCell>
        <StatusCell $w={152}>
          <svg width="12" height="15" fill="none"><path d="M.5 3c0-3 11-3 11 0v9c0 3-11 3-11 0z" fill="#fad250" stroke="#d29b1e" /><path d="M1 3c2 2 8 2 10 0M1 6.500c2 2 8 2 10 0M1 10c2 2 8 2 10 0" stroke="#fff5c8" /></svg>
          Tên DLKT: KETOAN2017
        </StatusCell>
        <StatusCell $w={244}>
          <svg width="13" height="16" fill="none"><path d="M.5 13c0-4 3-5 6-5s6 1 6 5l-2 2h-8z" fill="#5aaaf0" stroke="#1e6eb4" /><path d="M4.500 8.500l2 4.500 2-4.500z" fill="#fff" /><circle cx="7" cy="4.500" r="2.800" fill="#fac878" /><path d="M4 4c0-5 6.500-5 6 0-1-1.500-4-1-6 0z" fill="#32281e" /></svg>
          Người dùng: hkdung@software.misa.com.vn
        </StatusCell>
        <StatusCell $w={10} />
        <StatusCell $w={61} />
        <StatusCell $w={149} $bold>Tổng đài tư vấn: 1900 8677</StatusCell>
        <StatusCell $w={31}>OVR</StatusCell>
        <StatusCell $w={32}>NUM</StatusCell>
        <StatusCell $w={37} />
        <StatusCell $w={36} />
        <StatusCell $w={54}>11:52 SA</StatusCell>
        <StatusCell $w={63}>05/04/2017</StatusCell>
        <Resize>
          <svg width="12" height="12" fill="#46648c"><path d="M8 0h2v2H8zM4 4h2v2H4zM8 4h2v2H8zM0 8h2v2H0zM4 8h2v2H4zM8 8h2v2H8z" /></svg>
        </Resize>
      </StatusBar>
    </Page>
  );
}
